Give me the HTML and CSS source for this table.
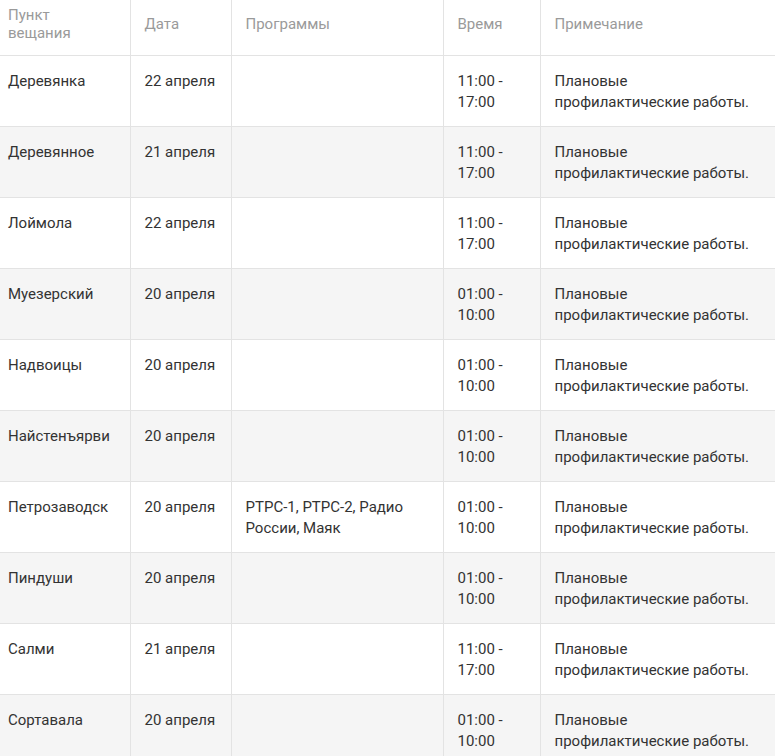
FILE: index.html
```html
<!DOCTYPE html>
<html lang="ru">
<head>
<meta charset="utf-8">
<link rel="stylesheet" href="styles.css">
</head>
<body>
<table class="schedule">
  <colgroup>
    <col class="c1"><col class="c2"><col class="c3"><col class="c4"><col class="c5">
  </colgroup>
  <thead>
    <tr><th>Пункт вещания</th><th>Дата</th><th>Программы</th><th>Время</th><th>Примечание</th></tr>
  </thead>
  <tbody>
    <tr><td>Деревянка</td><td>22 апреля</td><td></td><td>11:00 - 17:00</td><td>Плановые профилактические работы.</td></tr>
    <tr><td>Деревянное</td><td>21 апреля</td><td></td><td>11:00 - 17:00</td><td>Плановые профилактические работы.</td></tr>
    <tr><td>Лоймола</td><td>22 апреля</td><td></td><td>11:00 - 17:00</td><td>Плановые профилактические работы.</td></tr>
    <tr><td>Муезерский</td><td>20 апреля</td><td></td><td>01:00 - 10:00</td><td>Плановые профилактические работы.</td></tr>
    <tr><td>Надвоицы</td><td>20 апреля</td><td></td><td>01:00 - 10:00</td><td>Плановые профилактические работы.</td></tr>
    <tr><td>Найстенъярви</td><td>20 апреля</td><td></td><td>01:00 - 10:00</td><td>Плановые профилактические работы.</td></tr>
    <tr><td>Петрозаводск</td><td>20 апреля</td><td>РТРС-1, РТРС-2, Радио России, Маяк</td><td>01:00 - 10:00</td><td>Плановые профилактические работы.</td></tr>
    <tr><td>Пиндуши</td><td>20 апреля</td><td></td><td>01:00 - 10:00</td><td>Плановые профилактические работы.</td></tr>
    <tr><td>Салми</td><td>21 апреля</td><td></td><td>11:00 - 17:00</td><td>Плановые профилактические работы.</td></tr>
    <tr><td>Сортавала</td><td>20 апреля</td><td></td><td>01:00 - 10:00</td><td>Плановые профилактические работы.</td></tr>
  </tbody>
</table>
</body>
</html>
```

FILE: styles.css
```css
html, body {
  margin: 0;
  padding: 0;
  background: #fff;
}
body {
  font-family: Roboto, "Liberation Sans", sans-serif;
  font-size: 15px;
  color: #333;
}
.schedule {
  border-collapse: collapse;
  table-layout: fixed;
  width: 775px;
}
.c1 { width: 130px; }
.c2 { width: 101px; }
.c3 { width: 212px; }
.c4 { width: 97px; }
.c5 { width: 235px; }
.schedule th,
.schedule td {
  text-align: left;
  border-left: 1px solid #e3e3e3;
  border-bottom: 1px solid #e3e3e3;
  padding-left: 14px;
  padding-right: 8px;
}
.schedule th:first-child,
.schedule td:first-child {
  border-left: none;
  padding-left: 8px;
  padding-right: 20px;
}
.schedule th:last-child,
.schedule td:last-child {
  padding-right: 20px;
}
.schedule th {
  font-weight: 400;
  color: #9a9a9a;
  line-height: 18px;
  padding-top: 6px;
  padding-bottom: 13px;
  vertical-align: middle;
}
.schedule td {
  line-height: 21px;
  padding-top: 15px;
  padding-bottom: 13px;
  height: 42px;
  vertical-align: top;
}
.schedule tbody tr:nth-child(even) td {
  background: #f5f5f5;
}
```
